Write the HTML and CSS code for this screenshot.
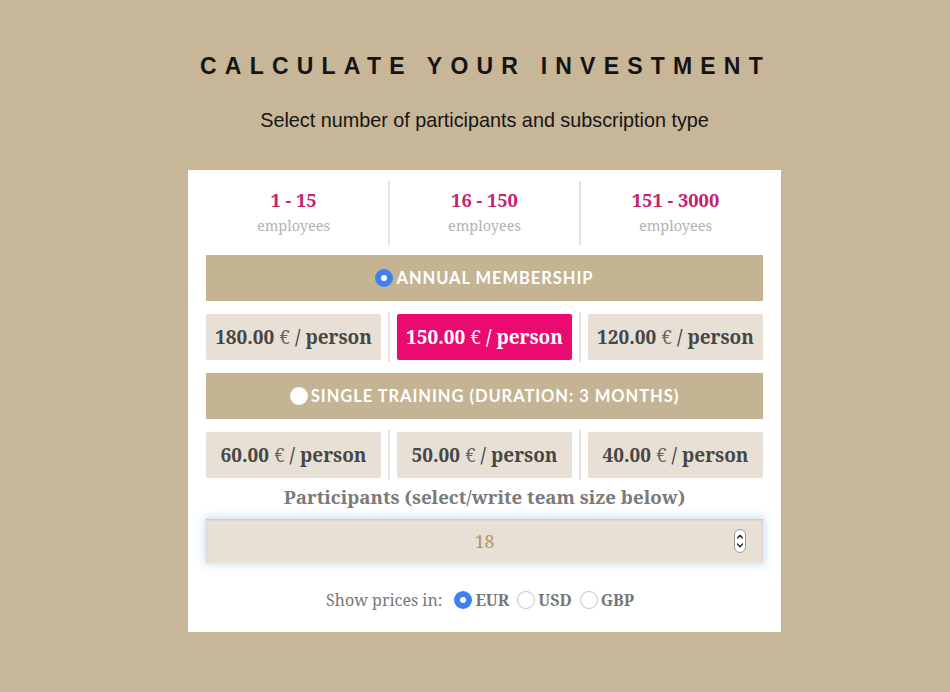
FILE: index.html
```html
<!DOCTYPE html>
<html lang="en">
<head>
<meta charset="utf-8">
<title>Calculate your investment</title>
<link rel="stylesheet" href="styles.css">
</head>
<body>
<main class="page">
  <h1 class="title">CALCULATE YOUR INVESTMENT</h1>
  <p class="subtitle">Select number of participants and subscription type</p>

  <section class="card">
    <div class="tabs">
      <div class="tab"><div class="range">1 - 15</div><div class="unit">employees</div></div>
      <div class="tab"><div class="range">16 - 150</div><div class="unit">employees</div></div>
      <div class="tab"><div class="range">151 - 3000</div><div class="unit">employees</div></div>
    </div>

    <div class="plan-bar"><span class="radio radio-on"></span><span class="plan-name">ANNUAL MEMBERSHIP</span></div>
    <div class="prices">
      <div class="price">180.00 <span class="cur">€</span> / person</div>
      <div class="price price-active">150.00 <span class="cur">€</span> / person</div>
      <div class="price">120.00 <span class="cur">€</span> / person</div>
    </div>

    <div class="plan-bar"><span class="radio radio-off"></span><span class="plan-name">SINGLE TRAINING (DURATION: 3 MONTHS)</span></div>
    <div class="prices">
      <div class="price">60.00 <span class="cur">€</span> / person</div>
      <div class="price">50.00 <span class="cur">€</span> / person</div>
      <div class="price">40.00 <span class="cur">€</span> / person</div>
    </div>

    <div class="label">Participants (select/write team size below)</div>
    <div class="field">
      <input class="field-input" type="text" value="18">
      <span class="spinner">
        <svg width="12" height="24" viewBox="0 0 12 24">
          <rect x="0.5" y="0.5" width="11" height="23" rx="5.5" fill="#fff" stroke="#9a9a9a"/>
          <path d="M3.5 9 L6 6.3 L8.5 9" fill="none" stroke="#222" stroke-width="1.3" stroke-linecap="round" stroke-linejoin="round"/>
          <path d="M3.5 15 L6 17.7 L8.5 15" fill="none" stroke="#222" stroke-width="1.3" stroke-linecap="round" stroke-linejoin="round"/>
        </svg>
      </span>
    </div>

    <div class="currency">
      <span class="currency-label">Show prices in:</span>
      <span class="opt"><span class="radio radio-on"></span>EUR</span>
      <span class="opt"><span class="radio radio-line"></span>USD</span>
      <span class="opt"><span class="radio radio-line"></span>GBP</span>
    </div>
  </section>
</main>
</body>
</html>
```

FILE: styles.css
```css
html, body {
  margin: 0;
  padding: 0;
}
body {
  background: #c7b697;
  font-family: "Noto Serif", "DejaVu Serif", serif;
  height: 692px;
  overflow: hidden;
}
.page {
  padding: 50px 0 0 19px;
  text-align: center;
}
.title {
  margin: 0 0 0 2px;
  font-family: "Liberation Sans", Arial, sans-serif;
  font-size: 23px;
  font-weight: 700;
  letter-spacing: 8.2px;
  line-height: 32px;
  color: #141414;
}
.subtitle {
  margin: 26px 0 0;
  font-family: "Liberation Sans", Arial, sans-serif;
  font-size: 19.8px;
  line-height: 24px;
  color: #151515;
}
.card {
  width: 557px;
  margin: 38px auto 0;
  background: #fff;
  padding: 11px 18px 20px;
}
.tabs {
  display: grid;
  grid-template-columns: repeat(3, 1fr);
  column-gap: 16px;
  height: 64px;
}
.tab {
  position: relative;
  display: flex;
  flex-direction: column;
  align-items: center;
  padding-top: 7px;
}
.tab + .tab::before,
.price + .price::before {
  content: "";
  position: absolute;
  left: -9px;
  top: 0;
  bottom: 0;
  width: 2px;
  background: #e6e3df;
}
.range {
  font-size: 18.3px;
  font-weight: 700;
  color: #c4226a;
  line-height: 24px;
}
.unit {
  font-size: 14.5px;
  color: #b3b3b3;
  line-height: 24px;
  margin-top: 1px;
}
.plan-bar {
  margin-top: 10px;
  height: 46px;
  background: #c5b493;
  display: flex;
  align-items: center;
  justify-content: center;
  gap: 3px;
  font-family: "Lato", "Open Sans", sans-serif;
  font-weight: 700;
  font-size: 16.5px;
  letter-spacing: 0.95px;
  color: #fff;
}
.prices + .plan-bar {
  margin-top: 11px;
}
.radio {
  display: inline-block;
  width: 18px;
  height: 18px;
  border-radius: 50%;
  box-sizing: border-box;
  flex: none;
}
.radio-on {
  background: #3d82ee;
  position: relative;
}
.radio-on::after {
  content: "";
  position: absolute;
  left: 6px;
  top: 6px;
  width: 6px;
  height: 6px;
  border-radius: 50%;
  background: #fff;
}
.radio-off {
  background: #fff;
}
.radio-line {
  background: #fff;
  border: 1px solid #c4c4c4;
}
.prices {
  display: grid;
  grid-template-columns: repeat(3, 1fr);
  column-gap: 16px;
  margin-top: 11px;
  padding: 2px 0;
}
.price {
  position: relative;
  height: 46px;
  background: #e8e0d5;
  border-radius: 2px;
  display: flex;
  align-items: center;
  justify-content: center;
  font-size: 19px;
  font-weight: 700;
  color: #474747;
}
.price + .price::before {
  top: -2px;
  bottom: -2px;
}
.cur {
  font-weight: 400;
  color: #666;
  margin: 0 5px 0 5px;
}
.price-active {
  background: #ea0a70;
  color: #fff;
}
.price-active .cur {
  color: #fff;
}
.label {
  margin-top: 4px;
  font-size: 18.7px;
  font-weight: 700;
  color: #7a7a7a;
  line-height: 26px;
}
.field {
  position: relative;
  margin-top: 9px;
  height: 44px;
}
.field-input {
  display: block;
  width: 100%;
  height: 44px;
  box-sizing: border-box;
  border: none;
  outline: none;
  background: #e8e0d5;
  text-align: center;
  font-family: "Noto Serif", "DejaVu Serif", serif;
  font-size: 17.5px;
  color: #ad9668;
  box-shadow: 0 0 8px 2px rgba(130, 180, 240, 0.42), inset 0 1px 2px rgba(0, 0, 0, 0.12);
}
.spinner {
  position: absolute;
  right: 17px;
  top: 10px;
  line-height: 0;
}
.currency {
  margin: 25px 9px 0 0;
  display: flex;
  justify-content: center;
  align-items: center;
  line-height: 24px;
  font-size: 16px;
  color: #777;
}
.currency-label {
  margin-right: 12px;
}
.opt {
  display: inline-flex;
  align-items: center;
  gap: 3px;
  font-weight: 700;
  margin-right: 8px;
}
.opt:last-child {
  margin-right: 0;
}
```
